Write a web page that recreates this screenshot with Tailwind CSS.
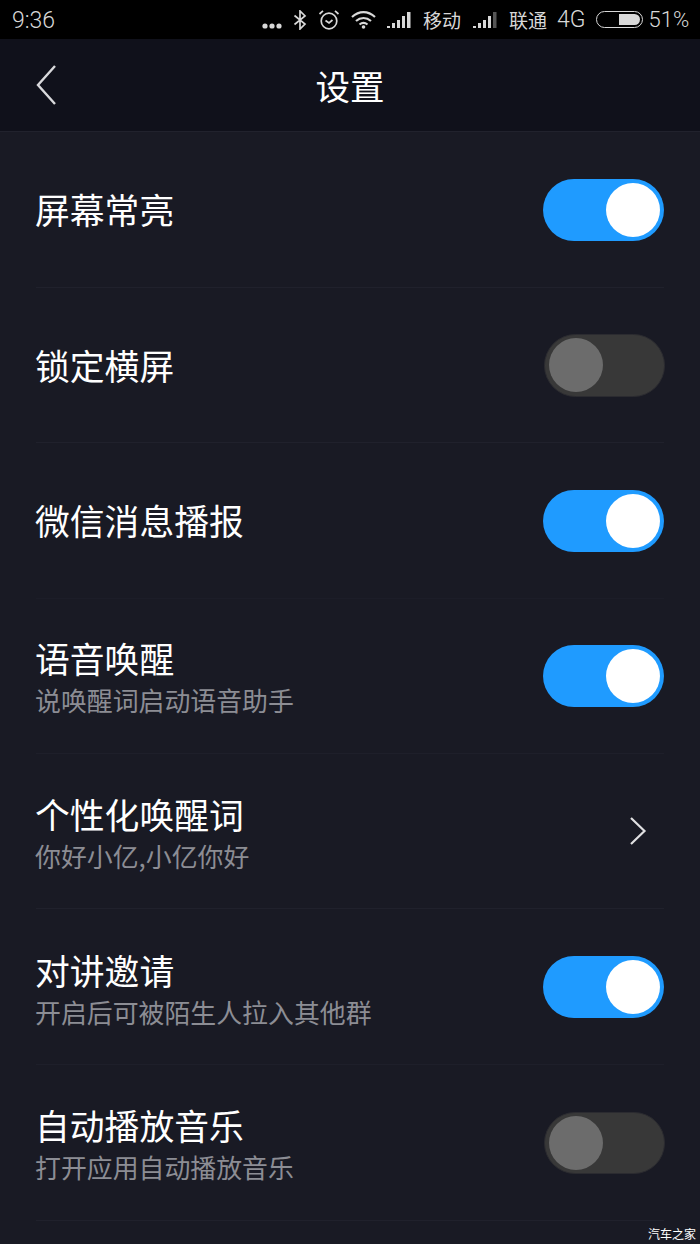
<!DOCTYPE html>
<html lang="zh-CN">
<head>
<meta charset="UTF-8">
<title>设置</title>
<script src="https://cdn.jsdelivr.net/npm/@tailwindcss/browser@4"></script>
</head>
<body class="bg-[#191a24] font-['Noto_Sans_CJK_SC',sans-serif]">
<div class="relative w-[700px] h-[1244px] overflow-hidden bg-[#191a24]">

  <!-- status bar -->
  <div class="h-[39px] bg-black flex items-center pl-[12px] text-[#d8d8d8]">
    <span class="text-[23px] leading-none mt-[2px] font-light font-['Roboto',sans-serif] w-[250px]">9:36</span>
    <svg class="w-[20px] h-[6px] mt-[12px]" viewBox="0 0 20 6" fill="#d8d8d8"><circle cx="3" cy="3" r="2.6"/><circle cx="10" cy="3" r="2.6"/><circle cx="17" cy="3" r="2.6"/></svg>
    <svg class="w-[14px] h-[20px] ml-[11px]" viewBox="0 0 14 20" fill="none" stroke="#d8d8d8" stroke-width="1.7"><path d="M1.5 5.5 12 14l-5 5V1l5 5L1.500 14.500"/></svg>
    <svg class="w-[22px] h-[21px] ml-[11px]" viewBox="0 0 22 21" fill="none" stroke="#d8d8d8" stroke-width="1.7"><circle cx="11" cy="12" r="7.800"/><path d="M7.500 11.500 11 14l3.500-3M1.500 5 5 1.800M20.500 5 17 1.800"/></svg>
    <svg class="w-[25px] h-[18px] ml-[11px]" viewBox="0 0 25 18" fill="none" stroke="#d8d8d8" stroke-width="2.200"><path d="M1 6c7-6.500 16-6.500 23 0M5 10c4.500-4 10.500-4 15 0M8.500 13.500c2.500-2 5.500-2 8 0"/><circle cx="12.500" cy="16" r="1.800" fill="#d8d8d8" stroke="none"/></svg>
    <svg class="w-[24px] h-[16px] ml-[11px]" viewBox="0 0 24 16" fill="#d8d8d8"><rect x="0" y="14" width="3" height="2"/><rect x="5" y="11" width="3" height="5"/><rect x="10" y="8" width="3" height="8"/><rect x="15" y="4" width="3" height="12"/><rect x="20" y="0" width="3.500" height="16"/></svg>
    <span class="text-[19px] ml-[12px] leading-none">移动</span>
    <svg class="w-[24px] h-[16px] ml-[12px]" viewBox="0 0 24 16" fill="#d8d8d8"><rect x="0" y="14" width="3" height="2"/><rect x="5" y="11" width="3" height="5"/><rect x="10" y="8" width="3" height="8"/><rect x="15" y="4" width="3" height="12"/><rect x="20" y="0" width="3.500" height="16" fill="#555"/></svg>
    <span class="text-[19px] ml-[12px] leading-none">联通</span>
    <span class="text-[23px] font-light ml-[10px] font-['Roboto',sans-serif] leading-none">4G</span>
    <div class="w-[47px] h-[17px] ml-[10px] rounded-full border-[1.5px] border-[#d8d8d8] flex justify-end items-center p-[2px]">
      <div class="w-[21px] h-full bg-[#d8d8d8] rounded-r-full rounded-l-[2px]"></div>
    </div>
    <span class="text-[22px] font-light ml-[6px] font-['Roboto',sans-serif] leading-none">51%</span>
  </div>

  <!-- header -->
  <div class="h-[93px] bg-[#10111b] border-b border-[#21222d] flex items-center relative">
    <svg class="absolute left-[35px] top-[25px] w-[22px] h-[42px]" viewBox="0 0 22 42" fill="none" stroke="#d9d9dc" stroke-width="2.400"><path d="M20 2 3 21l17 19"/></svg>
    <h1 class="w-full text-center text-[34.500px] text-white leading-none">设置</h1>
  </div>

  <!-- rows -->
  <div class="px-[36px] text-white">
    <div class="h-[155.500px] border-b border-[#20212c] flex items-center justify-between">
      <div class="text-[34.800px] leading-[50px] ml-[-1px]">屏幕常亮</div>
      <div class="w-[121px] h-[62px] mt-[1px] rounded-full bg-[#1f9bff] flex justify-end items-center pr-[4px]"><div class="w-[54px] h-[54px] rounded-full bg-white"></div></div>
    </div>
    <div class="h-[155.500px] border-b border-[#20212c] flex items-center justify-between">
      <div class="text-[34.800px] leading-[50px] ml-[-1px]">锁定横屏</div>
      <div class="w-[121px] h-[63px] mt-[1px] mr-[-1px] rounded-full bg-[#383838] border border-[#2b2b30] flex items-center pl-[4px]"><div class="w-[54px] h-[54px] rounded-full bg-[#6c6c6c]"></div></div>
    </div>
    <div class="h-[155.500px] border-b border-[#1c1d28] flex items-center justify-between">
      <div class="text-[34.800px] leading-[50px] ml-[-1px]">微信消息播报</div>
      <div class="w-[121px] h-[62px] mt-[1px] rounded-full bg-[#1f9bff] flex justify-end items-center pr-[4px]"><div class="w-[54px] h-[54px] rounded-full bg-white"></div></div>
    </div>
    <div class="h-[155.500px] border-b border-[#1e1f2a] flex items-center justify-between">
      <div class="mb-[3px] ml-[-1px]">
        <div class="text-[34.800px] leading-[50px]">语音唤醒</div>
        <div class="text-[25.900px] leading-[32px] mt-[1px] text-[#8c8d94]">说唤醒词启动语音助手</div>
      </div>
      <div class="w-[121px] h-[62px] rounded-full bg-[#1f9bff] flex justify-end items-center pr-[4px]"><div class="w-[54px] h-[54px] rounded-full bg-white"></div></div>
    </div>
    <div class="h-[155px] border-b border-[#20212c] flex items-center justify-between">
      <div class="mb-[1px] ml-[-1px]">
        <div class="text-[34.800px] leading-[50px]">个性化唤醒词</div>
        <div class="text-[25.900px] leading-[32px] mt-[1px] text-[#8c8d94]">你好小亿,小亿你好</div>
      </div>
      <svg class="w-[18px] h-[30px] mr-[17px]" viewBox="0 0 18 30" fill="none" stroke="#e0e0e2" stroke-width="2.200"><path d="M2 2l13.500 13L2 28"/></svg>
    </div>
    <div class="h-[156px] border-b border-[#1e1f2a] flex items-center justify-between">
      <div class="mb-[1px] ml-[-1px]">
        <div class="text-[34.800px] leading-[50px]">对讲邀请</div>
        <div class="text-[25.900px] leading-[32px] mt-[1px] text-[#8c8d94]">开启后可被陌生人拉入其他群</div>
      </div>
      <div class="w-[121px] h-[62px] mt-[1px] rounded-full bg-[#1f9bff] flex justify-end items-center pr-[4px]"><div class="w-[54px] h-[54px] rounded-full bg-white"></div></div>
    </div>
    <div class="h-[155.500px] border-b border-[#20212c] flex items-center justify-between">
      <div class="mb-[2px] ml-[-1px]">
        <div class="text-[34.800px] leading-[50px]">自动播放音乐</div>
        <div class="text-[25.900px] leading-[32px] mt-[1px] text-[#8c8d94]">打开应用自动播放音乐</div>
      </div>
      <div class="w-[121px] h-[62px] mt-[1px] mr-[-1px] rounded-full bg-[#383838] border border-[#2b2b30] flex items-center pl-[4px]"><div class="w-[54px] h-[54px] rounded-full bg-[#6c6c6c]"></div></div>
    </div>
  </div>

  <!-- watermark -->
  <div class="absolute right-[4px] bottom-[3px] text-[12px] leading-[14px] text-white">汽车之家</div>
</div>
</body>
</html>
